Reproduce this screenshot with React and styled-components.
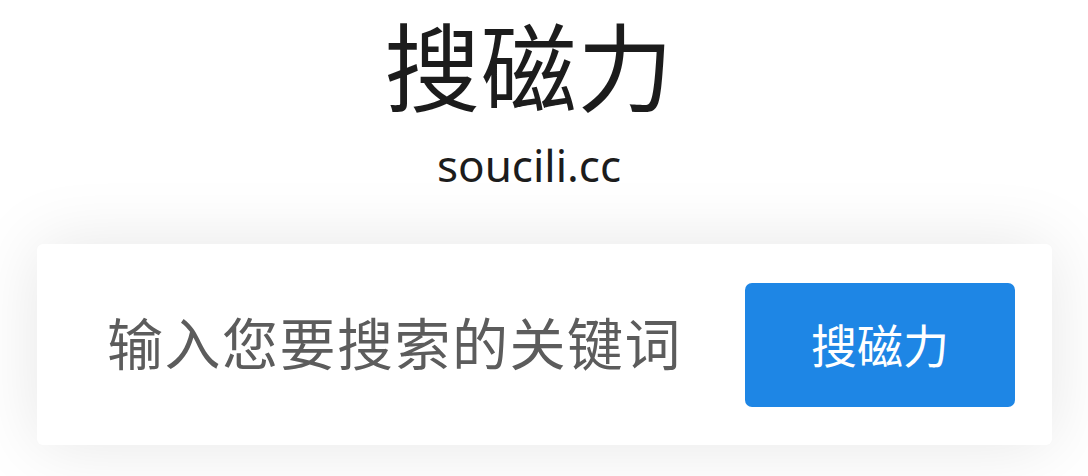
import React from "react";
import styled, { createGlobalStyle } from "styled-components";

const Global = createGlobalStyle`
  html, body { margin: 0; padding: 0; background: #ffffff; }
  body { font-family: "Noto Sans", "Noto Sans CJK SC", sans-serif; }
`;

const Page = styled.div`
  width: 1088px;
  height: 476px;
  overflow: hidden;
  display: flex;
  flex-direction: column;
  align-items: center;
  background: #ffffff;
`;

const Title = styled.h1`
  margin: 3px 0 0 0;
  font-family: "Noto Sans CJK SC", sans-serif;
  font-weight: 400;
  font-size: 96px;
  line-height: 120px;
  color: #1c1c1c;
  letter-spacing: 0.5px;
  padding-right: 30px;
`;

const Domain = styled.div`
  margin-top: 14px;
  font-family: "Noto Sans", sans-serif;
  font-size: 44px;
  line-height: 56px;
  color: #1c1c1c;
  padding-right: 30px;
`;

const Card = styled.form`
  box-sizing: border-box;
  align-self: stretch;
  margin: 51px 36px 0 37px;
  height: 201px;
  background: #ffffff;
  border-radius: 6px;
  box-shadow: 0 0 70px rgba(0, 0, 0, 0.1);
  display: flex;
  align-items: center;
  padding: 0 37px 0 70px;
`;

const Field = styled.input`
  flex: 1;
  min-width: 0;
  border: none;
  outline: none;
  background: transparent;
  font-family: "Noto Sans CJK SC", sans-serif;
  font-size: 56px;
  letter-spacing: 1.5px;
  color: #333;
  padding: 0;
  height: 80px;
  margin-bottom: 8px;
  &::placeholder { color: #5c5c5c; }
`;

const Button = styled.button`
  flex: none;
  width: 270px;
  height: 124px;
  border: none;
  border-radius: 7px;
  background: #1e86e5;
  color: #ffffff;
  font-family: "Noto Sans CJK SC", sans-serif;
  font-size: 46px;
  padding: 0 0 4px 0;
  display: flex;
  align-items: center;
  justify-content: center;
  cursor: pointer;
`;

export default function App() {
  return (
    <Page>
      <Global />
      <Title>搜磁力</Title>
      <Domain>soucili.cc</Domain>
      <Card onSubmit={(e) => e.preventDefault()}>
        <Field placeholder="输入您要搜索的关键词" />
        <Button type="submit">搜磁力</Button>
      </Card>
    </Page>
  );
}
